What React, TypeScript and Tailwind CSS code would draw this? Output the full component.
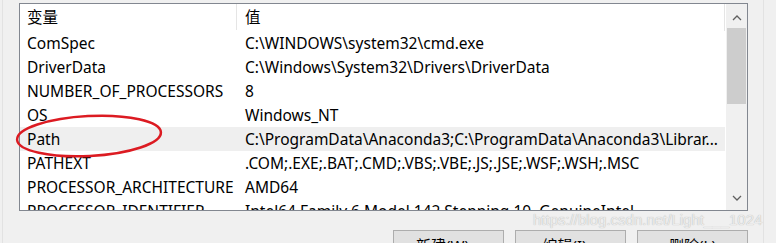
const rows: [string, string][] = [
  ["ComSpec", "C:\\WINDOWS\\system32\\cmd.exe"],
  ["DriverData", "C:\\Windows\\System32\\Drivers\\DriverData"],
  ["NUMBER_OF_PROCESSORS", "8"],
  ["OS", "Windows_NT"],
  ["Path", "C:\\ProgramData\\Anaconda3;C:\\ProgramData\\Anaconda3\\Librar..."],
  ["PATHEXT", ".COM;.EXE;.BAT;.CMD;.VBS;.VBE;.JS;.JSE;.WSF;.WSH;.MSC"],
  ["PROCESSOR_ARCHITECTURE", "AMD64"],
  ["PROCESSOR_IDENTIFIER", "Intel64 Family 6 Model 142 Stepping 10, GenuineIntel"],
];

function Scrollbar() {
  return (
    <div className="w-[21px] ml-[1px] bg-[#f0f0f0] flex flex-col items-center">
      <svg width="10" height="8" viewBox="0 0 10 8" className="mt-[10px]">
        <path d="M1 6 L5 2 L9 6" fill="none" stroke="#606060" strokeWidth="1.3" />
      </svg>
      <div className="mt-[6px] w-[19px] h-[76px] bg-[#cdcdcd]" />
      <div className="flex-1" />
      <svg width="10" height="8" viewBox="0 0 10 8" className="mb-[8px]">
        <path d="M1 2 L5 6 L9 2" fill="none" stroke="#606060" strokeWidth="1.3" />
      </svg>
    </div>
  );
}

export default function App() {
  return (
    <div
      className="relative w-[776px] h-[243px] overflow-hidden bg-[#f0f0f0] text-black"
      style={{ fontFamily: '"Noto Sans", "Noto Sans CJK SC", sans-serif' }}
    >
      <div className="absolute left-[2px] top-0 bottom-0 w-px bg-[#e2e2e2]" />
      <div className="absolute left-[763px] top-0 bottom-0 w-px bg-[#e2e2e2]" />

      <div className="pt-[3px] pl-[19px]">
        <div className="w-[729px] h-[208px] border border-[#828790] bg-white flex overflow-hidden">
          <div className="flex-1 flex flex-col overflow-hidden text-[15.5px] leading-none">
            <div className="h-[27px] flex shrink-0">
              <div className="w-[217px] pl-[7px] pt-[1px] flex items-center border-r border-[#e5e5e5] mb-[1px]">
                变量
              </div>
              <div className="flex-1 pl-[8px] pt-[1px] flex items-center border-r border-[#e5e5e5]">值</div>
            </div>
            {rows.map(([name, value]) => (
              <div
                key={name}
                className={
                  "h-[24px] flex shrink-0 items-center pt-[2px] whitespace-nowrap " +
                  (name === "Path" ? "bg-[#efefef]" : "")
                }
              >
                <div className="w-[217px] pl-[7px]">{name}</div>
                <div className="flex-1 pl-[8px]">{value}</div>
              </div>
            ))}
          </div>
          <Scrollbar />
        </div>

        <div className="flex gap-[11px] ml-[374px] mt-[19px]">
          {["新建(W)...", "编辑(I)...", "删除(L)"].map((b) => (
            <div
              key={b}
              className="w-[111px] h-[24px] border border-[#adadad] bg-[#e1e1e1] flex justify-center pt-[7px] text-[15px] leading-none"
            >
              {b}
            </div>
          ))}
        </div>
      </div>

      <svg className="absolute left-0 top-0" width="200" height="170">
        <ellipse
          cx="89"
          cy="136"
          rx="72"
          ry="20"
          transform="rotate(-3 89 136)"
          fill="none"
          stroke="#dc1b22"
          strokeWidth="2.5"
        />
      </svg>

      <div
        className="absolute left-[533px] top-[212px] text-[15px] leading-none text-[#ececec] whitespace-nowrap [text-shadow:0_0_1px_#a8a8a8]"
        style={{ fontFamily: '"Liberation Sans", sans-serif' }}
      >
        https://blog.csdn.net/Light___1024
      </div>
    </div>
  );
}
